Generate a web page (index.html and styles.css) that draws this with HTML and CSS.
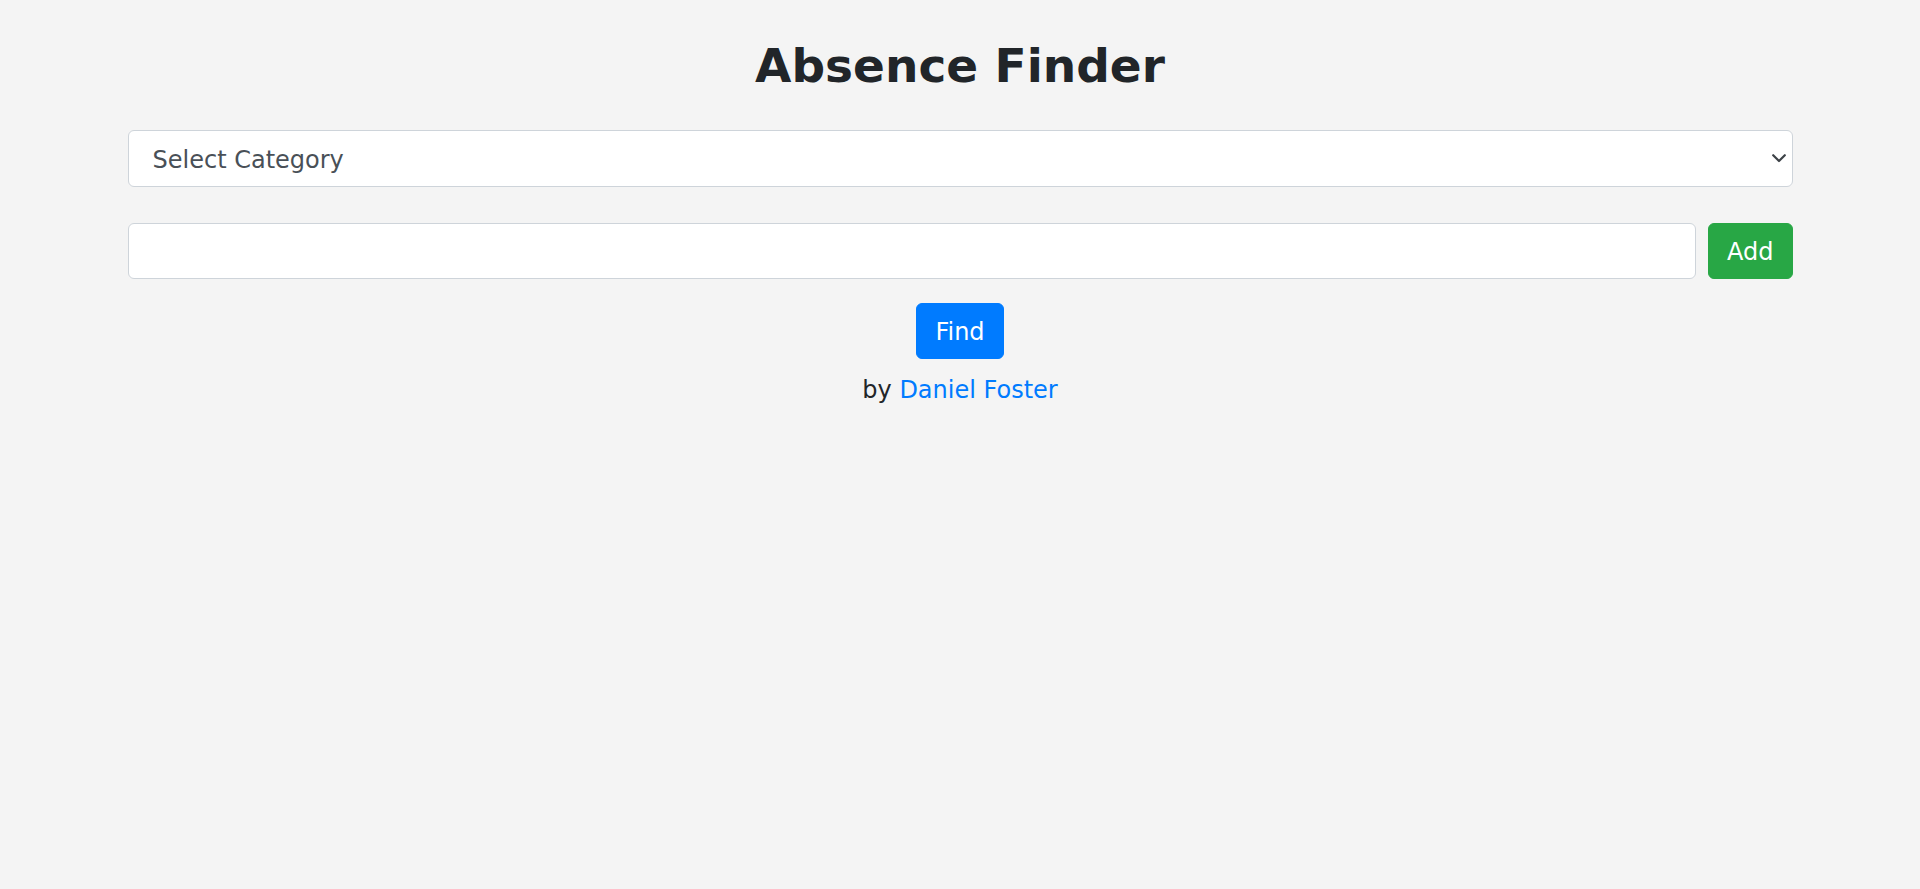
FILE: index.html
```html
<!DOCTYPE html>
<html lang="en">
<head>
<meta charset="utf-8">
<title>Absence Finder</title>
<link rel="stylesheet" href="styles.css">
</head>
<body>
<main class="container">
  <h1 class="title">Absence Finder</h1>
  <div class="select-wrap">
    <select class="select">
      <option>Select Category</option>
    </select>
    <svg class="chevron" width="14" height="9" viewBox="0 0 14 9" aria-hidden="true">
      <path d="M1.2 1.2 L7 7 L12.8 1.2" fill="none" stroke="#3d4247" stroke-width="2.2" stroke-linecap="round" stroke-linejoin="round"/>
    </svg>
  </div>
  <div class="add-row">
    <input class="text-input" type="text">
    <button class="btn btn-green">Add</button>
  </div>
  <div class="find-row">
    <button class="btn btn-blue">Find</button>
  </div>
  <p class="credit">by <a href="#" class="link">Daniel Foster</a></p>
</main>
</body>
</html>
```

FILE: styles.css
```css
html, body {
  margin: 0;
  padding: 0;
}
body {
  background: #f4f4f4;
  font-family: "DejaVu Sans", Verdana, sans-serif;
  font-size: 24px;
  line-height: 36px;
  color: #212529;
}
.container {
  max-width: 1665px;
  margin: 0 auto;
  padding: 0 22.5px;
  box-sizing: content-box;
}
.title {
  margin: 37px 0 35px;
  font-size: 47px;
  line-height: 58px;
  font-weight: bold;
  text-align: center;
  color: #212529;
}
.select-wrap {
  position: relative;
}
.select {
  display: block;
  width: 100%;
  height: 57px;
  box-sizing: border-box;
  margin: 0;
  padding: 2px 50px 0 24px;
  border: 1px solid #ced4da;
  border-radius: 6px;
  background: #fff;
  font-family: "DejaVu Sans", Verdana, sans-serif;
  font-size: 24px;
  color: #495057;
  -webkit-appearance: none;
  appearance: none;
  outline: none;
}
.chevron {
  position: absolute;
  right: 7px;
  top: 24px;
  pointer-events: none;
}
.add-row {
  display: flex;
  gap: 12px;
  margin-top: 36px;
}
.text-input {
  flex: 1;
  height: 56px;
  box-sizing: border-box;
  margin: 0;
  padding: 0 18px;
  border: 1px solid #ced4da;
  border-radius: 6px;
  background: #fff;
  font-family: "DejaVu Sans", Verdana, sans-serif;
  font-size: 24px;
  color: #495057;
  outline: none;
}
.btn {
  height: 56px;
  box-sizing: border-box;
  margin: 0;
  padding: 2px 18px 0;
  border: 1px solid transparent;
  border-radius: 6px;
  font-family: "DejaVu Sans", Verdana, sans-serif;
  font-size: 24px;
  line-height: 36px;
  color: #fff;
  cursor: pointer;
}
.btn-green {
  background: #28a745;
  border-color: #28a745;
}
.btn-blue {
  background: #007bff;
  border-color: #007bff;
}
.find-row {
  display: flex;
  justify-content: center;
  margin-top: 24px;
}
.credit {
  margin: 13px 0 0;
  text-align: center;
}
.link {
  color: #007bff;
  text-decoration: none;
}
```
